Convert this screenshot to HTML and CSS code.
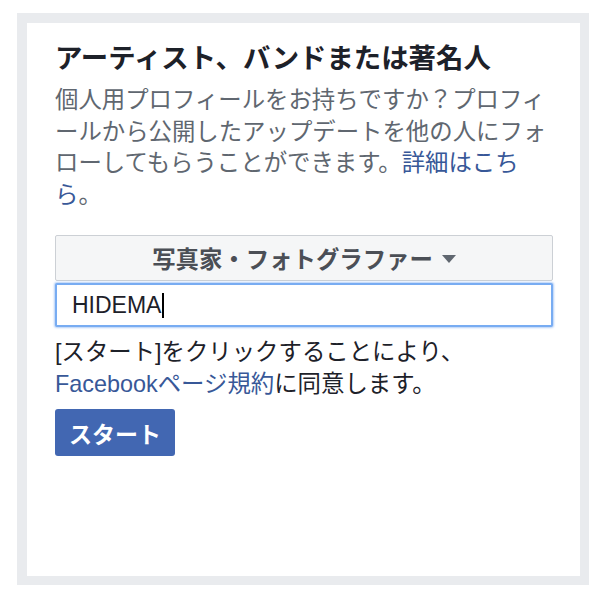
FILE: index.html
```html
<!DOCTYPE html>
<html lang="ja">
<head>
<meta charset="utf-8">
<title>アーティスト、バンドまたは著名人</title>
<link rel="stylesheet" href="styles.css">
</head>
<body>
<div class="frame">
  <div class="card">
    <h1 class="title">アーティスト、バンドまたは著名人</h1>
    <p class="desc">個人用プロフィールをお持ちですか？プロフィールから公開したアップデートを他の人にフォローしてもらうことができます。<a class="link" href="#">詳細はこちら</a>。</p>
    <div class="select">
      <span class="select-label">写真家・フォトグラファー</span>
      <svg class="caret" width="14" height="8" viewBox="0 0 14 8"><path d="M0 0 H14 L7 8 Z" fill="#606770"/></svg>
    </div>
    <div class="input"><span class="value">HIDEMA</span><span class="cursor"></span></div>
    <p class="terms">[スタート]をクリックすることにより、<br><a class="link" href="#">Facebookページ規約</a>に同意します。</p>
    <button class="start">スタート</button>
  </div>
</div>
</body>
</html>
```
FILE: styles.css
```css
* { box-sizing: border-box; }
html, body { margin: 0; padding: 0; background: #ffffff; }
body {
  font-family: "Liberation Sans", "Noto Sans CJK JP", sans-serif;
  color: #1d2129;
}
.frame {
  margin: 13px 0 0 17px;
  width: 572px;
  height: 572px;
  border-style: solid;
  border-color: #e9ebee;
  border-width: 10px 9px 9px 10px;
  background: #ffffff;
}
.card {
  padding: 19px 27px 0 28px;
}
.title {
  margin: 0;
  font-size: 27.4px;
  line-height: 34px;
  font-weight: bold;
  color: #1d2129;
}
.desc {
  margin: 9px 0 0;
  font-size: 23.4px;
  line-height: 31.5px;
  color: #606770;
}
.link {
  color: #385898;
  text-decoration: none;
}
.select {
  margin-top: 24px;
  height: 46px;
  background: #f5f6f7;
  border: 1px solid #ccd0d5;
  border-radius: 2px;
  display: flex;
  align-items: center;
  justify-content: center;
  gap: 9px;
}
.select-label {
  font-size: 23.4px;
  font-weight: bold;
  color: #4b4f56;
}
.caret { display: block; margin-top: 2px; }
.input {
  margin-top: 2px;
  height: 44px;
  border: 2px solid #78acf2;
  border-radius: 2px;
  box-shadow: 0 0 2px 1px rgba(120, 170, 240, 0.55);
  background: #ffffff;
  display: flex;
  align-items: center;
  padding-left: 15px;
}
.value {
  font-size: 23px;
  color: #1d2129;
}
.cursor {
  display: inline-block;
  width: 2px;
  height: 25px;
  background: #000000;
  margin-left: 1px;
}
.terms {
  margin: 9px 0 0;
  font-size: 23.4px;
  line-height: 32px;
  color: #1d2129;
}
.start {
  margin-top: 9px;
  height: 47px;
  padding: 0 14px;
  border: none;
  border-radius: 3px;
  background: #4267b2;
  color: #ffffff;
  font-family: "Liberation Sans", "Noto Sans CJK JP", sans-serif;
  font-size: 23px;
  font-weight: bold;
  display: block;
}
```
